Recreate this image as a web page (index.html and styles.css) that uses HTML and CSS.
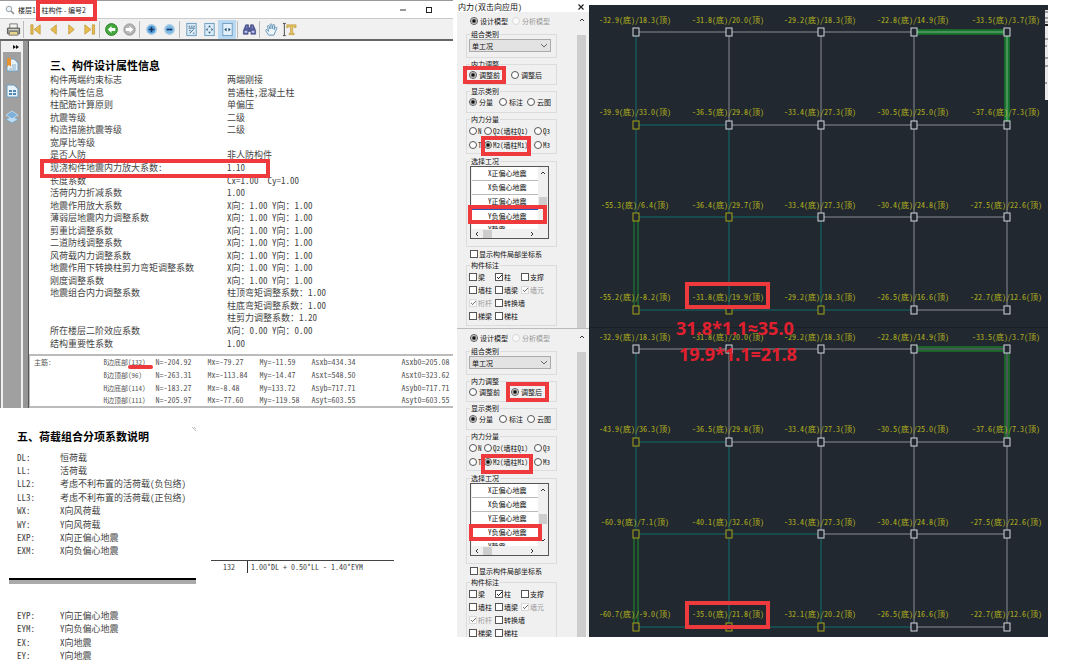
FILE: index.html
```
<!DOCTYPE html>
<html lang="zh-CN">
<head>
<meta charset="utf-8">
<title>柱构件 - 编号2</title>
<link rel="stylesheet" href="styles.css">
</head>
<body>
<svg class="defs" aria-hidden="true">
  <defs>
    <rect id="node" x="-3" y="-4" width="6" height="8"/>
    <g id="grid-lines">
      <path class="beam" d="M47 27H325M140 27V120M232 27V212M325 27V305M140 120H418M418 120V305M232 212H418M325 305H418"/>
      <path class="teal" d="M47 27V212M47 120H140M140 120V305M47 212H232M232 212V305M47 305H325"/>
      <path class="green-glow" d="M325 27H418V120"/>
      <path class="green" d="M328 25H420V117M328 29H416V117M45 215V302M49 215V302"/>
      <path class="green-core" d="M328 27H418V117"/>
    </g>
    <g id="grid-nodes">
      <g class="node-white">
        <use href="#node" x="47" y="27"/><use href="#node" x="140" y="27"/><use href="#node" x="232" y="27"/><use href="#node" x="325" y="27"/><use href="#node" x="418" y="27"/>
        <use href="#node" x="140" y="120"/><use href="#node" x="232" y="120"/><use href="#node" x="325" y="120"/><use href="#node" x="418" y="120"/>
        <use href="#node" x="232" y="212"/><use href="#node" x="325" y="212"/><use href="#node" x="418" y="212"/>
        <use href="#node" x="325" y="305"/><use href="#node" x="418" y="305"/>
      </g>
      <g class="node-yellow">
        <use href="#node" x="47" y="120"/><use href="#node" x="47" y="212"/><use href="#node" x="140" y="212"/>
        <use href="#node" x="47" y="305"/><use href="#node" x="140" y="305"/><use href="#node" x="232" y="305"/>
      </g>
    </g>
  </defs>
</svg>

<main class="board">
  <div class="documents">
    <section class="viewer">
      <header class="titlebar">
        <svg class="title-icon" viewBox="0 0 10 10"><circle cx="4" cy="4" r="2.8" fill="#eef3f7" stroke="#9aa3aa"/><path d="M6 6l3 3" stroke="#8a8f94" stroke-width="1.6"/></svg>
        <span>楼层1 - 柱构件 - 编号2</span>
        <div class="window-buttons">
          <button aria-label="最小化"><svg viewBox="0 0 8 8"><path d="M1 4h6" stroke="#333"/></svg></button>
          <button aria-label="最大化"><svg viewBox="0 0 8 8"><rect x="1.5" y="1.5" width="5" height="5" fill="none" stroke="#222"/></svg></button>
        </div>
      </header>
      <nav class="toolbar">
        <button aria-label="打印"><svg viewBox="0 0 16 16"><path d="M4 2h8v5H4z" fill="#f4f4f0" stroke="#777"/><path d="M1.5 6.5h13v6h-13z" fill="#9a9a94" stroke="#55554f"/><path d="M3 8h10" stroke="#d9d9d0"/><path d="M4 10h8l1 4H3z" fill="#e8d58c" stroke="#777"/></svg></button>
        <i class="sep"></i>
        <button aria-label="首页"><svg viewBox="0 0 16 16"><path d="M3 3h2.4v10H3zM13 3v10L6.500 8z" fill="#e8bd4e" stroke="#b98d2c" stroke-width=".7"/></svg></button>
        <button aria-label="上一页"><svg viewBox="0 0 16 16"><path d="M11 3v10L5 8z" fill="#e8bd4e" stroke="#b98d2c" stroke-width=".7"/></svg></button>
        <button aria-label="下一页"><svg viewBox="0 0 16 16"><path d="M5 3v10l6-5z" fill="#e8bd4e" stroke="#b98d2c" stroke-width=".7"/></svg></button>
        <button aria-label="末页"><svg viewBox="0 0 16 16"><path d="M11 3h2.400v10H11zM3 3v10l6.500-5z" fill="#e8bd4e" stroke="#b98d2c" stroke-width=".7"/></svg></button>
        <i class="sep"></i>
        <button aria-label="后退"><svg viewBox="0 0 16 16"><circle cx="8" cy="8" r="6.300" fill="#45a83c" stroke="#2c7f28"/><path d="M8 4.200L4 8l4 3.800V9.500h4v-3H8z" fill="#fff"/></svg></button>
        <button aria-label="前进"><svg viewBox="0 0 16 16"><circle cx="8" cy="8" r="6" fill="#b5b5b5" stroke="#929292"/><path d="M8 4.200L12 8l-4 3.800V9.500H4v-3h4z" fill="#fff"/></svg></button>
        <i class="sep"></i>
        <button aria-label="放大"><svg viewBox="0 0 16 16"><circle cx="8" cy="8" r="5" fill="#5ba4dc" stroke="#a9cbe6" stroke-width="1.500"/><path d="M8 5v6M5 8h6" stroke="#12396b" stroke-width="1.800"/></svg></button>
        <button aria-label="缩小"><svg viewBox="0 0 16 16"><circle cx="8" cy="8" r="5" fill="#7db9e4" stroke="#a9cbe6" stroke-width="1.500"/><path d="M5 8h6" stroke="#12396b" stroke-width="1.800"/></svg></button>
        <i class="sep"></i>
        <button aria-label="实际大小"><svg viewBox="0 0 16 16"><rect x="3" y="1.500" width="10" height="13" fill="#d9ebf7" stroke="#6b9cc0"/><path d="M5 4.500h1.500M7.500 4.500H9M10 4.500h1.500M5 6.500h6.500M6 12l4-4M5.500 9h1.500M9.500 12H11" stroke="#38617f"/></svg></button>
        <button aria-label="适合页面"><svg viewBox="0 0 16 16"><rect x="3" y="1.500" width="10" height="13" fill="#d9ebf7" stroke="#6b9cc0"/><path d="M8 3.500L6.500 5.500h3zM8 12.500l-1.500-2h3zM4 8l2-1.500v3zM12 8l-2-1.500v3z" fill="#38617f"/></svg></button>
        <button class="active" aria-label="适合宽度"><svg viewBox="0 0 16 16"><rect x="3" y="1.500" width="10" height="13" fill="#e4f1fb" stroke="#6b9cc0"/><path d="M4.500 8L7 6v4zM11.500 8L9 6v4z" fill="#1f4f78"/></svg></button>
        <i class="sep"></i>
        <button aria-label="查找"><svg viewBox="0 0 16 16"><path d="M4 3h3v3h2V3h3l2.500 6v4H9.500v-3h-3v3h-5V9z" fill="#525a9b" stroke="#31376d" stroke-width=".6"/><path d="M3 9.500h2.500v2H3zM10.500 9.500H13v2h-2.500zM5 4v3M11 4v3" fill="#c9d2ef" stroke="#aab4dd" stroke-width=".6"/></svg></button>
        <i class="sep"></i>
        <button aria-label="手形工具"><svg viewBox="0 0 16 16"><path d="M5 14L2 9.500c-.8-1.300.8-2 1.600-1L5 10 3.700 4.800c-.2-1.300 1.300-1.500 1.700-.3L6.500 7.500 6.600 2.800c0-1.200 1.700-1.200 1.800 0l.3 4.500 1-4c.3-1.100 1.800-.8 1.600.4l-.6 4.500 1.500-2.400c.7-1 1.900-.2 1.400.9L12 10.500 10.500 14z" fill="#eef6fb" stroke="#5f8fb4"/></svg></button>
        <button aria-label="选择文本"><svg viewBox="0 0 16 16"><path d="M1 1.500h3M2.500 1.500v13M1 14.500h3" stroke="#444" fill="none"/><path d="M5 3h10v3h-1.500l-.5-1h-1.500v7h1.500v1.500H7.500V12H9V5H7.200l-.7 1H5z" fill="#e6c15c" stroke="#b6923a" stroke-width=".6"/></svg></button>
      </nav>
      <div class="viewer-body">
        <aside class="rail">
          <button class="rail-toggle" aria-label="展开"><svg viewBox="0 0 8 8"><path d="M1 2l3 2-3 2zM4 2l3 2-3 2z" fill="#111"/></svg></button>
          <div class="rail-tabs">
            <button aria-label="书签"><svg viewBox="0 0 14 16"><path d="M2 2h7l4 4v8H2z" fill="#e7f1f9" stroke="#6f9dbf"/><path d="M2 1h4v9l-2-2-2 2z" fill="#e8912f"/><path d="M7 8h4M7 10h4M4 12h7" stroke="#88aecb"/></svg></button>
            <button aria-label="缩略图"><svg viewBox="0 0 14 16"><path d="M2 2h7l4 4v8H2z" fill="#e7f1f9" stroke="#6f9dbf"/><path d="M4 7h3v2H4zM8 7h3v2H8zM4 10h3v2H4zM8 10h3v2H8z" fill="#5187b0"/></svg></button>
            <button aria-label="图层"><svg viewBox="0 0 14 16"><path d="M7 7l6 3.500L7 14l-6-3.500z" fill="#bcdcf2" stroke="#6f9dbf" stroke-width=".7"/><path d="M7 2l6 4-6 4-6-4z" fill="#7db1da" stroke="#dbeaf5" stroke-width=".7"/></svg></button>
          </div>
        </aside>
        <article class="page">
          <h2>三、构件设计属性信息</h2>
          <table class="props">
            <tr><th>构件两端约束标志</th><td>两端刚接</td></tr>
            <tr><th>构件属性信息</th><td>普通柱,混凝土柱</td></tr>
            <tr><th>柱配筋计算原则</th><td>单偏压</td></tr>
            <tr><th>抗震等级</th><td>二级</td></tr>
            <tr><th>构造措施抗震等级</th><td>二级</td></tr>
            <tr><th>宽厚比等级</th><td></td></tr>
            <tr><th>是否人防</th><td>非人防构件</td></tr>
            <tr><th>现浇构件地震内力放大系数:</th><td>1.10</td></tr>
            <tr><th>长度系数</th><td>Cx=1.00&nbsp; Cy=1.00</td></tr>
            <tr><th>活荷内力折减系数</th><td>1.00</td></tr>
            <tr><th>地震作用放大系数</th><td>X向：1.00 Y向：1.00</td></tr>
            <tr><th>薄弱层地震内力调整系数</th><td>X向：1.00 Y向：1.00</td></tr>
            <tr><th>剪重比调整系数</th><td>X向：1.00 Y向：1.00</td></tr>
            <tr><th>二道防线调整系数</th><td>X向：1.00 Y向：1.00</td></tr>
            <tr><th>风荷载内力调整系数</th><td>X向：1.00 Y向：1.00</td></tr>
            <tr><th>地震作用下转换柱剪力弯矩调整系数</th><td>X向：1.00 Y向：1.00</td></tr>
            <tr><th>刚度调整系数</th><td>X向：1.00 Y向：1.00</td></tr>
            <tr><th>地震组合内力调整系数</th><td>柱顶弯矩调整系数：1.00</td></tr>
            <tr><th></th><td>柱底弯矩调整系数：1.00</td></tr>
            <tr><th></th><td>柱剪力调整系数：1.20</td></tr>
            <tr><th>所在楼层二阶效应系数</th><td>X向：0.00 Y向：0.00</td></tr>
            <tr><th>结构重要性系数</th><td>1.00</td></tr>
          </table>
          <table class="rebar">
            <colgroup><col class="c-name"><col class="c-side"><col class="c-num"><col class="c-num"><col class="c-num"><col class="c-area"><col></colgroup>
            <tr><th>主筋:</th><th>B边底部(132)</th><td>N=-204.92</td><td>Mx=-79.27</td><td>My=-11.59</td><td>Asxb=434.34</td><td>Asxb0=205.08</td></tr>
            <tr><th></th><th>B边顶部(96)</th><td>N=-263.31</td><td>Mx=-113.84</td><td>My=-14.47</td><td>Asxt=548.50</td><td>Asxt0=323.62</td></tr>
            <tr><th></th><th>H边底部(114)</th><td>N=-183.27</td><td>Mx=-8.48</td><td>My=133.72</td><td>Asyb=717.71</td><td>Asyb0=717.71</td></tr>
            <tr><th></th><th>H边顶部(111)</th><td>N=-205.97</td><td>Mx=-77.60</td><td>My=-119.58</td><td>Asyt=603.55</td><td>Asyt0=603.55</td></tr>
          </table>
        </article>
      </div>
    </section>

    <section class="notes">
      <div class="legend">
        <h2>五、荷载组合分项系数说明</h2>
        <table class="legend-main">
          <tr><th>DL:</th><td>恒荷载</td></tr>
          <tr><th>LL:</th><td>活荷载</td></tr>
          <tr><th>LL2:</th><td>考虑不利布置的活荷载(负包络)</td></tr>
          <tr><th>LL3:</th><td>考虑不利布置的活荷载(正包络)</td></tr>
          <tr><th>WX:</th><td>X向风荷载</td></tr>
          <tr><th>WY:</th><td>Y向风荷载</td></tr>
          <tr><th>EXP:</th><td>X向正偏心地震</td></tr>
          <tr><th>EXM:</th><td>X向负偏心地震</td></tr>
        </table>
        <div class="page-break"></div>
        <table class="legend-rest">
          <tr><th>EYP:</th><td>Y向正偏心地震</td></tr>
          <tr><th>EYM:</th><td>Y向负偏心地震</td></tr>
          <tr><th>EX:</th><td>X向地震</td></tr>
          <tr><th>EY:</th><td>Y向地震</td></tr>
        </table>
      </div>
      <div class="formula"><span>132</span><span class="expr">1.00*DL + 0.50*LL - 1.40*EYM</span></div>
      <svg class="pencil" viewBox="0 0 6 6"><path d="M1 1l4 4M3 1l2 2" stroke="#aaa" stroke-width=".8"/></svg>
    </section>
    <i class="mark mark-title"></i>
    <i class="mark mark-factor"></i>
    <i class="stroke-132"></i>
  </div>

  <div class="panels">
    <form class="panel">
      <header class="panel-title"><span>内力(双击向应用)</span><button type="button" aria-label="关闭"><svg viewBox="0 0 8 8"><path d="M1.500 1.500l5 5M6.500 1.500l-5 5" stroke="#222" stroke-width="1.200"/></svg></button></header>
      <div class="panel-main">
        <div class="panel-body">
          <div class="row model"><label><input type="radio" name="m1" checked>设计模型</label><label class="off"><input type="radio" name="m1" disabled>分析模型</label></div>
          <fieldset class="g-combo"><legend>组合类别</legend><select aria-label="组合类别"><option>单工况</option></select></fieldset>
          <fieldset class="g-adjust"><legend>内力调整</legend><div class="row two"><label><input type="radio" name="a1" checked>调整前</label><label><input type="radio" name="a1">调整后</label></div></fieldset>
          <fieldset class="g-show"><legend>显示类别</legend><div class="row three"><label><input type="radio" name="s1" checked>分量</label><label><input type="radio" name="s1">标注</label><label><input type="radio" name="s1">云图</label></div></fieldset>
          <fieldset class="g-part"><legend>内力分量</legend>
            <div class="row part"><label><input type="radio" name="p1">N</label><label><input type="radio" name="p1">Q2(墙柱Q1)</label><label><input type="radio" name="p1">Q3</label></div>
            <div class="row part"><label><input type="radio" name="p1">T</label><label><input type="radio" name="p1" checked>M2(墙柱M1)</label><label><input type="radio" name="p1">M3</label></div>
          </fieldset>
          <fieldset class="g-case"><legend>选择工况</legend>
            <div class="listbox">
              <ul><li>X正偏心地震</li><li>X负偏心地震</li><li>Y正偏心地震</li><li class="sel">Y负偏心地震</li><li>Y静震</li></ul>
              <div class="vbar"><svg viewBox="0 0 8 8"><path d="M2 5l2-2 2 2" fill="none" stroke="#333"/></svg><i></i><svg viewBox="0 0 8 8"><path d="M2 3l2 2 2-2" fill="none" stroke="#333"/></svg></div>
              <div class="hbar"><svg viewBox="0 0 8 8"><path d="M5 2L3 4l2 2" fill="none" stroke="#333"/></svg><i></i><svg viewBox="0 0 8 8"><path d="M3 2l2 2-2 2" fill="none" stroke="#333"/></svg></div>
            </div>
          </fieldset>
          <div class="row local"><label><input type="checkbox">显示构件局部坐标系</label></div>
          <fieldset class="g-label"><legend>构件标注</legend>
            <div class="row checks"><label><input type="checkbox">梁</label><label><input type="checkbox" checked>柱</label><label><input type="checkbox">支撑</label></div>
            <div class="row checks"><label><input type="checkbox">墙柱</label><label><input type="checkbox">墙梁</label><label class="off"><input type="checkbox" checked disabled>墙元</label></div>
            <div class="row checks"><label class="off"><input type="checkbox" checked disabled>桁杆</label><label><input type="checkbox">转换墙</label></div>
            <div class="row checks"><label><input type="checkbox">梯梁</label><label><input type="checkbox">梯柱</label></div>
          </fieldset>
        </div>
        <div class="scrollbar"><svg viewBox="0 0 8 8"><path d="M2 5l2-2 2 2" fill="none" stroke="#333"/></svg><i></i></div>
      </div>
      <i class="mark mark-before"></i><i class="mark mark-m2"></i><i class="mark mark-case"></i>
    </form>

    <form class="panel second">
      <div class="panel-main">
        <div class="panel-body">
          <div class="row model"><label><input type="radio" name="m2" checked>设计模型</label><label class="off"><input type="radio" name="m2" disabled>分析模型</label></div>
          <fieldset class="g-combo"><legend>组合类别</legend><select aria-label="组合类别"><option>单工况</option></select></fieldset>
          <fieldset class="g-adjust"><legend>内力调整</legend><div class="row two"><label><input type="radio" name="a2">调整前</label><label><input type="radio" name="a2" checked>调整后</label></div></fieldset>
          <fieldset class="g-show"><legend>显示类别</legend><div class="row three"><label><input type="radio" name="s2" checked>分量</label><label><input type="radio" name="s2">标注</label><label><input type="radio" name="s2">云图</label></div></fieldset>
          <fieldset class="g-part"><legend>内力分量</legend>
            <div class="row part"><label><input type="radio" name="p2">N</label><label><input type="radio" name="p2">Q2(墙柱Q1)</label><label><input type="radio" name="p2">Q3</label></div>
            <div class="row part"><label><input type="radio" name="p2">T</label><label><input type="radio" name="p2" checked>M2(墙柱M1)</label><label><input type="radio" name="p2">M3</label></div>
          </fieldset>
          <fieldset class="g-case"><legend>选择工况</legend>
            <div class="listbox">
              <ul><li>X正偏心地震</li><li>X负偏心地震</li><li>Y正偏心地震</li><li>Y负偏心地震</li><li>Y静震</li></ul>
              <div class="vbar"><svg viewBox="0 0 8 8"><path d="M2 5l2-2 2 2" fill="none" stroke="#333"/></svg><i></i><svg viewBox="0 0 8 8"><path d="M2 3l2 2 2-2" fill="none" stroke="#333"/></svg></div>
              <div class="hbar"><svg viewBox="0 0 8 8"><path d="M5 2L3 4l2 2" fill="none" stroke="#333"/></svg><i></i><svg viewBox="0 0 8 8"><path d="M3 2l2 2-2 2" fill="none" stroke="#333"/></svg></div>
            </div>
          </fieldset>
          <div class="row local"><label><input type="checkbox">显示构件局部坐标系</label></div>
          <fieldset class="g-label"><legend>构件标注</legend>
            <div class="row checks"><label><input type="checkbox">梁</label><label><input type="checkbox" checked>柱</label><label><input type="checkbox">支撑</label></div>
            <div class="row checks"><label><input type="checkbox">墙柱</label><label><input type="checkbox">墙梁</label><label class="off"><input type="checkbox" checked disabled>墙元</label></div>
            <div class="row checks"><label class="off"><input type="checkbox" checked disabled>桁杆</label><label><input type="checkbox">转换墙</label></div>
            <div class="row checks"><label><input type="checkbox">梯梁</label><label><input type="checkbox">梯柱</label></div>
          </fieldset>
        </div>
        <div class="scrollbar"><svg viewBox="0 0 8 8"><path d="M2 5l2-2 2 2" fill="none" stroke="#333"/></svg><i></i></div>
      </div>
      <i class="mark mark-after"></i><i class="mark mark-m2b"></i><i class="mark mark-caseb"></i>
    </form>
  </div>

  <div class="drawings">
    <svg class="plan glowing" viewBox="0 0 459 323">
      <use href="#grid-lines"/>
      <g class="forces">
        <text x="46" y="18">-32.9(底)/18.3(顶)</text><text x="139" y="18">-31.8(底)/20.0(顶)</text><text x="231" y="18">-29.2(底)/18.3(顶)</text><text x="324" y="18">-22.8(底)/14.9(顶)</text><text x="417" y="18">-33.5(底)/3.7(顶)</text>
        <text x="46" y="110">-39.9(底)/33.0(顶)</text><text x="139" y="110">-36.5(底)/29.8(顶)</text><text x="231" y="110">-33.4(底)/27.3(顶)</text><text x="324" y="110">-30.5(底)/25.0(顶)</text><text x="417" y="110">-37.6(底)/7.3(顶)</text>
        <text x="46" y="203">-55.3(底)/6.4(顶)</text><text x="139" y="203">-36.4(底)/29.7(顶)</text><text x="231" y="203">-33.4(底)/27.3(顶)</text><text x="324" y="203">-30.4(底)/24.8(顶)</text><text x="417" y="203">-27.5(底)/22.6(顶)</text>
        <text x="46" y="295">-55.2(底)/-8.2(顶)</text><text x="139" y="295">-31.8(底)/19.9(顶)</text><text x="231" y="295">-29.2(底)/18.3(顶)</text><text x="324" y="295">-26.5(底)/16.6(顶)</text><text x="417" y="295">-22.7(底)/12.6(顶)</text>
      </g>
      <use href="#grid-nodes"/>
      <rect class="plan-mark" x="98" y="279" width="81" height="23"/>
    </svg>
    <svg class="plan" viewBox="0 6 459 309">
      <use href="#grid-lines"/>
      <g class="forces">
        <text x="46" y="18">-32.9(底)/18.3(顶)</text><text x="139" y="18">-31.8(底)/20.0(顶)</text><text x="231" y="18">-29.2(底)/18.3(顶)</text><text x="324" y="18">-22.8(底)/14.9(顶)</text><text x="417" y="18">-33.5(底)/3.7(顶)</text>
        <text x="46" y="110">-43.9(底)/36.3(顶)</text><text x="139" y="110">-36.5(底)/29.8(顶)</text><text x="231" y="110">-33.4(底)/27.3(顶)</text><text x="324" y="110">-30.5(底)/25.0(顶)</text><text x="417" y="110">-37.6(底)/7.3(顶)</text>
        <text x="46" y="203">-60.9(底)/7.1(顶)</text><text x="139" y="203">-40.1(底)/32.6(顶)</text><text x="231" y="203">-33.4(底)/27.3(顶)</text><text x="324" y="203">-30.4(底)/24.8(顶)</text><text x="417" y="203">-27.5(底)/22.6(顶)</text>
        <text x="46" y="295">-60.7(底)/-9.0(顶)</text><text x="139" y="295">-35.0(底)/21.8(顶)</text><text x="231" y="295">-32.1(底)/20.2(顶)</text><text x="324" y="295">-26.5(底)/16.6(顶)</text><text x="417" y="295">-22.7(底)/12.6(顶)</text>
      </g>
      <use href="#grid-nodes"/>
      <rect class="plan-mark" x="98" y="281" width="81" height="24"/>
    </svg>
    <svg class="edge" viewBox="0 0 3 90"><path d="M0 0h3v90H0z" fill="#e9e9ec"/><path d="M0 2h3M0 8h3M0 12h3M0 29h3M0 36h2M0 48h3M0 56h3M0 73h2" stroke="#555"/><path d="M0 15h3" stroke="#222" stroke-width="2"/></svg>
    <div class="calc"><p>31.8*1.1≈35.0</p><p>19.9*1.1=21.8</p></div>
  </div>
</main>
</body>
</html>
```

FILE: styles.css
```
* { box-sizing: border-box; }

body {
  margin: 0;
  background: #fff;
  color: #222;
  font: 9px/12px "Noto Sans Mono CJK SC", "Liberation Mono", "Noto Sans CJK SC", monospace;
}

button {
  padding: 0;
  border: 0;
  background: none;
  display: flex;
  align-items: center;
  justify-content: center;
}

table { border-collapse: collapse; }
th, td { padding: 0; font-weight: 400; text-align: left; white-space: nowrap; }
h2, p, ul { margin: 0; padding: 0; }
svg { display: block; }
.defs { position: absolute; width: 0; height: 0; }

.board {
  display: grid;
  grid-template-columns: minmax(0, 457fr) minmax(0, 132fr) minmax(0, 459fr);
  padding-right: 32px;
  align-items: start;
}

.mark { position: absolute; border: 4px solid #ee3a3c; }

/* document viewer */
.documents { position: relative; }
.viewer { margin-right: 4px; border-top: 1px solid #999; }

.titlebar {
  display: flex;
  align-items: center;
  height: 17px;
  padding-left: 5px;
  gap: 3px;
  font: 7px/10px "Noto Sans CJK SC", sans-serif;
}
.title-icon { width: 10px; height: 10px; }
.window-buttons { margin-left: auto; display: flex; gap: 18px; padding-right: 20px; }
.window-buttons svg { width: 8px; height: 8px; }

.toolbar {
  display: flex;
  align-items: center;
  height: 21px;
  padding-left: 4px;
  background: #f1f1f1;
  border-top: 1px solid #ccc;
}
.toolbar button { width: 18px; height: 19px; }
.toolbar button.active { background: #b9d8f1; }
.toolbar svg { width: 15px; height: 15px; }
.sep { width: 1px; height: 17px; margin: 0 2px 0 1px; background: #bbb; }

.viewer-body { display: flex; border-top: 2px solid #666; }
.rail {
  width: 28px;
  background: #f0f0f0;
  border-left: 1px solid #888;
  border-right: 5px solid #969696;
  padding-right: 2px;
  display: flex;
  flex-direction: column;
}
.rail-toggle { height: 11px; padding-left: 10px; }
.rail-toggle svg { width: 8px; height: 8px; }
.rail-tabs {
  flex: 1;
  margin-left: 2px;
  background: #a0a0a0;
  display: flex;
  flex-direction: column;
  align-items: center;
  gap: 10px;
  padding-top: 5px;
}
.rail-tabs svg { width: 14px; height: 16px; }

.page { flex: 1; min-width: 0; padding-top: 16px; border-left: 1px solid #555; }
h2 { font-size: 11px; line-height: 16px; font-weight: 700; color: #000; }
.page h2 { padding-left: 21px; }
.props { margin: 1px 0 0 21px; height: 276px; color: #444; }
.props th { width: 177px; }
.rebar {
  table-layout: fixed;
  width: 100%;
  margin-top: 4px;
  border: solid #bbb;
  border-width: 2px 0 2px 1px;
  font-size: 8px;
  color: #555;
}
.rebar th { font-size: 7px; }
.rebar th:first-child { padding-left: 4px; }
.rebar tr { height: 13px; }
.c-name { width: 74px; }
.c-side, .c-num { width: 52px; }
.c-area { width: 90px; }

.mark-title { left: 36px; top: 0; width: 61px; height: 21px; }
.mark-factor { left: 40px; top: 159px; width: 230px; height: 19px; }
.stroke-132 { position: absolute; left: 128px; top: 365px; width: 25px; height: 4px; border-radius: 2px; background: #ee3a3c; }

/* load legend */
.notes { position: relative; display: flex; gap: 15px; padding: 20px 63px 0 9px; color: #444; }
.legend { width: 187px; }
.legend h2, .legend table { margin-left: 8px; }
.legend th { width: 43px; }
.legend-main { height: 107px; margin-top: 7px; }
.legend-rest { height: 54px; margin-top: 25px; }
.page-break { margin-top: 20px; height: 6px; border-top: 2px solid #000; background: #aaa; }
.formula {
  flex: 1;
  align-self: flex-start;
  margin-top: 132px;
  border-top: 1px solid #444;
  display: flex;
  font-size: 8px;
}
.formula span:first-child { width: 36px; padding-left: 12px; }
.expr { border-left: 1px solid #333; padding-left: 3px; white-space: pre; }
.pencil { position: absolute; left: 191px; top: 18px; width: 6px; height: 6px; }

/* option panels */
.panel {
  position: relative;
  height: 328px;
  overflow: hidden;
  background: #f0f0f0;
  font: 7px/10px "Noto Sans Mono CJK SC", "Liberation Mono", "Noto Sans CJK SC", monospace;
  color: #111;
}
.panel.second { height: 309px; border-top: 1px solid #bbb; }
.panel-title { height: 12px; display: flex; align-items: center; justify-content: space-between; padding: 2px 4px 0 1px; font-size: 8px; background: #fff; }
.panel-title svg { width: 8px; height: 8px; }
.panel-main { display: flex; height: 318px; }
.panel-body { flex: 1; display: flex; flex-direction: column; padding: 0 20px 0 9px; }
.scrollbar { width: 12px; padding: 4px 3px 0 0; background: #f0f0f0; display: flex; flex-direction: column; align-items: center; gap: 11px; }
.scrollbar svg { width: 8px; height: 8px; }
.scrollbar i { flex: 1; width: 9px; background: #cdcdcd; }

fieldset { margin: 0; padding: 0 0 0 2px; border: 1px solid #dcdcdc; min-width: 0; }
legend { padding: 0 1px; margin-left: 1px; height: 10px; }
.g-combo { height: 29px; margin-bottom: 1px; }
.g-adjust { height: 26px; margin-bottom: 1px; }
.g-show { height: 27px; margin-bottom: 1px; }
.g-part { height: 40px; margin-bottom: 2px; }
.g-case { height: 91px; }
.g-label { height: 66px; }

select {
  appearance: none;
  display: block;
  width: 82px;
  height: 13px;
  padding: 0 2px;
  border: 1px solid #aaa;
  border-radius: 0;
  color: #111;
  font: inherit;
  background:
    linear-gradient(45deg, transparent 38%, #666 38%, #666 62%, transparent 62%) no-repeat 71px 4px / 3px 3px,
    linear-gradient(135deg, transparent 38%, #666 38%, #666 62%, transparent 62%) no-repeat 74px 4px / 3px 3px,
    #e3e3e3;
}

.row { display: grid; align-items: center; height: 12px; }
.row label { display: flex; align-items: center; gap: 2px; white-space: nowrap; }
.model { height: 17px; padding-left: 4px; grid-template-columns: 42px auto; }
.two { grid-template-columns: 42px auto; }
.three { grid-template-columns: 30px 28px auto; }
.part { height: 14px; grid-template-columns: 15px 50px auto; }
.part label { gap: 1px; }
.local { height: 13px; padding-left: 4px; }
.checks { height: 13px; grid-template-columns: 26px 26px auto; }
.checks label, .local label { gap: 1px; }
.off { color: #999; }

input { appearance: none; flex: none; width: 8px; height: 8px; margin: 0; border: 1px solid #555; background: #fff; }
input[type="radio"] { border-radius: 50%; }
input[type="radio"]:checked { background: radial-gradient(#111 0 1px, #fff 3px); }
input[type="checkbox"]:checked {
  background:
    linear-gradient(45deg, transparent 40%, #222 40%, #222 60%, transparent 60%) no-repeat 1px 3px / 2px 2px,
    linear-gradient(135deg, transparent 42%, #222 42%, #222 58%, transparent 58%) no-repeat 2px 1px / 4px 4px,
    #fff;
}
input:disabled { border-color: #ccc; opacity: .6; }

.listbox {
  display: grid;
  grid-template: 62px 9px / 66px 9px;
  width: 79px;
  height: 73px;
  margin-left: 1px;
  padding-left: 1px;
  border: 1px solid #555;
  background: #f0f0f0;
}
.listbox ul { list-style: none; overflow: hidden; background: #fff; }
.listbox li { height: 14px; line-height: 13px; padding-left: 16px; border-bottom: 1px solid #bbb; }
.listbox li.sel { border-top: 1px solid #2a55c0; line-height: 12px; }
.listbox svg { width: 8px; height: 8px; }
.vbar { display: flex; flex-direction: column; justify-content: space-between; align-items: center; padding: 2px 0; }
.vbar i { width: 8px; height: 10px; margin-top: 8px; background: #cdcdcd; }
.hbar { display: flex; align-items: center; padding-left: 1px; }
.hbar i { width: 9px; height: 8px; margin: 0 36px 0 2px; background: #cdcdcd; }
.hbar svg { flex: none; }

.mark-before { left: 6px; top: 66px; width: 43px; height: 18px; }
.mark-m2 { left: 24px; top: 136px; width: 50px; height: 20px; }
.mark-case { left: 11px; top: 205px; width: 79px; height: 19px; }
.mark-after { left: 49px; top: 53px; width: 43px; height: 20px; }
.mark-m2b { left: 24px; top: 125px; width: 52px; height: 20px; }
.mark-caseb { left: 12px; top: 195px; width: 73px; height: 17px; }

/* structural plans */
.drawings { position: relative; padding-top: 5px; }
.plan { --glow: #1b3a2c; --edge: #1a9427; --core: #777b80; width: 100%; background: #212830; }
.plan.glowing { --glow: #14632a; --edge: #1b8a30; --core: #7fc48a; }
.plan + .plan { box-shadow: 0 -1px #1a2027; }
.beam { fill: none; stroke: #8b8d94; stroke-width: 1; }
.teal { fill: none; stroke: #126c6c; stroke-width: 1; }
.green-glow { fill: none; stroke: var(--glow); stroke-width: 5; }
.green { fill: none; stroke: var(--edge); stroke-width: 1; }
.green-core { fill: none; stroke: var(--core); stroke-width: 1; }
.node-white { fill: #212830; stroke: #d5d8e0; }
.node-yellow { fill: #212830; stroke: #a5a516; }
.forces { fill: #b5b51c; font: 8px "Noto Sans Mono CJK SC", "Liberation Mono", "Noto Sans CJK SC", monospace; text-anchor: middle; }
.plan-mark { fill: none; stroke: #ee3a3c; stroke-width: 4; }
.edge { position: absolute; right: 0; top: 10px; width: 3px; height: 90px; }
.calc {
  position: absolute;
  left: 87px;
  top: 315px;
  color: #e0202e;
  font: 700 18px/26px "Open Sans", "Noto Sans", sans-serif;
}
.calc p + p { padding-left: 3px; }
```
